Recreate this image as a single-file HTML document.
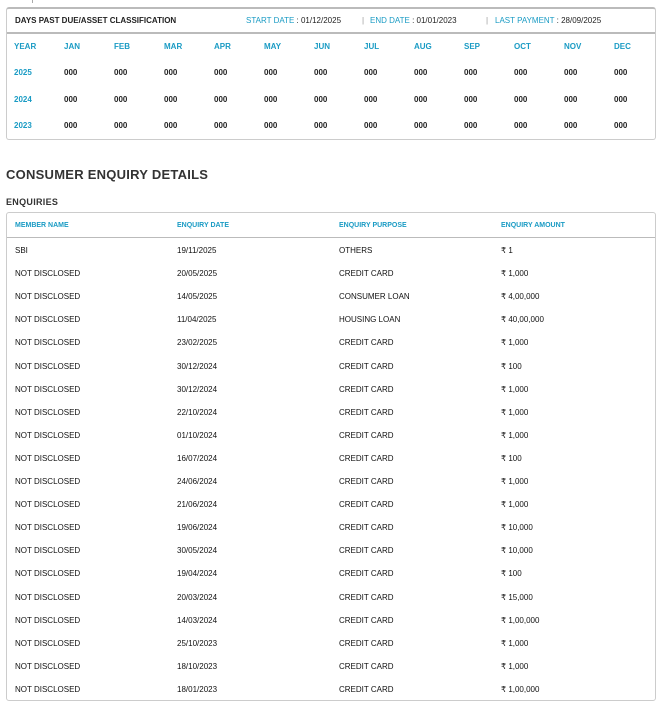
<!DOCTYPE html>
<html><head><meta charset="utf-8"><style>
*{margin:0;padding:0;box-sizing:border-box}
body{width:662px;height:722px;background:#fff;font-family:"Liberation Sans",sans-serif;color:#222;position:relative;overflow:hidden}
.a{position:absolute;white-space:nowrap;font-size:8px;line-height:10px}
.b{font-weight:bold}
.t{color:#1a9bc4;font-weight:bold}
.box{position:absolute;border:1px solid #ccc;border-radius:3px}
</style></head><body>
<div class="box" style="left:6px;top:7px;width:650px;height:133px;border-top:2px solid #bbb"></div>
<div style="position:absolute;left:7px;top:32px;width:648px;height:2px;background:#bbb"></div>
<div style="position:absolute;left:32px;top:0;width:1px;height:3px;background:#aaa"></div>
<div class="a b" style="left:15px;top:16px">DAYS PAST DUE/ASSET CLASSIFICATION</div>
<div class="a" style="left:246px;top:16px"><span class="t" style="font-weight:normal">START DATE</span> : 01/12/2025</div>
<div class="a" style="left:362px;top:16px;color:#999">|</div>
<div class="a" style="left:370px;top:16px"><span class="t" style="font-weight:normal">END DATE</span> : 01/01/2023</div>
<div class="a" style="left:486px;top:16px;color:#999">|</div>
<div class="a" style="left:495px;top:16px"><span class="t" style="font-weight:normal">LAST PAYMENT</span> : 28/09/2025</div>
<div id="g"></div>
<div class="a b" style="left:6px;top:167px;font-size:13px;line-height:16px;color:#333;letter-spacing:.25px">CONSUMER ENQUIRY DETAILS</div>
<div class="a b" style="left:6px;top:197px;font-size:9px;line-height:11px;color:#333;letter-spacing:.3px">ENQUIRIES</div>
<div class="box" style="left:6px;top:212px;width:650px;height:489px"></div>
<div style="position:absolute;left:7px;top:237px;width:648px;height:1px;background:#bbb"></div>
<div id="e"></div>
<script>
var m=["YEAR","JAN","FEB","MAR","APR","MAY","JUN","JUL","AUG","SEP","OCT","NOV","DEC"],h="";
m.forEach(function(s,i){h+='<div class="a t" style="left:'+(i?64+(i-1)*50:14)+'px;top:42px">'+s+'</div>';});
["2025","2024","2023"].forEach(function(y,r){var t=68+r*26.5;h+='<div class="a t" style="left:14px;top:'+t+'px">'+y+'</div>';for(var i=1;i<13;i++)h+='<div class="a b" style="left:'+(64+(i-1)*50)+'px;top:'+t+'px">000</div>';});
document.getElementById("g").innerHTML=h;
var d=[["SBI","19/11/2025","OTHERS","1"],["NOT DISCLOSED","20/05/2025","CREDIT CARD","1,000"],["NOT DISCLOSED","14/05/2025","CONSUMER LOAN","4,00,000"],["NOT DISCLOSED","11/04/2025","HOUSING LOAN","40,00,000"],["NOT DISCLOSED","23/02/2025","CREDIT CARD","1,000"],["NOT DISCLOSED","30/12/2024","CREDIT CARD","100"],["NOT DISCLOSED","30/12/2024","CREDIT CARD","1,000"],["NOT DISCLOSED","22/10/2024","CREDIT CARD","1,000"],["NOT DISCLOSED","01/10/2024","CREDIT CARD","1,000"],["NOT DISCLOSED","16/07/2024","CREDIT CARD","100"],["NOT DISCLOSED","24/06/2024","CREDIT CARD","1,000"],["NOT DISCLOSED","21/06/2024","CREDIT CARD","1,000"],["NOT DISCLOSED","19/06/2024","CREDIT CARD","10,000"],["NOT DISCLOSED","30/05/2024","CREDIT CARD","10,000"],["NOT DISCLOSED","19/04/2024","CREDIT CARD","100"],["NOT DISCLOSED","20/03/2024","CREDIT CARD","15,000"],["NOT DISCLOSED","14/03/2024","CREDIT CARD","1,00,000"],["NOT DISCLOSED","25/10/2023","CREDIT CARD","1,000"],["NOT DISCLOSED","18/10/2023","CREDIT CARD","1,000"],["NOT DISCLOSED","18/01/2023","CREDIT CARD","1,00,000"]];
var x=[15,177,339,501],e="";
["MEMBER NAME","ENQUIRY DATE","ENQUIRY PURPOSE","ENQUIRY AMOUNT"].forEach(function(s,i){e+='<div class="a t" style="font-size:7px;left:'+x[i]+'px;top:221px">'+s+'</div>';});
d.forEach(function(r,j){var t=246+j*23.1;r.forEach(function(s,i){e+='<div class="a" style="color:#111;left:'+x[i]+'px;top:'+t+'px">'+(i==3?'₹ '+s:s)+'</div>';});});
document.getElementById("e").innerHTML=e;
</script>
</body></html>
